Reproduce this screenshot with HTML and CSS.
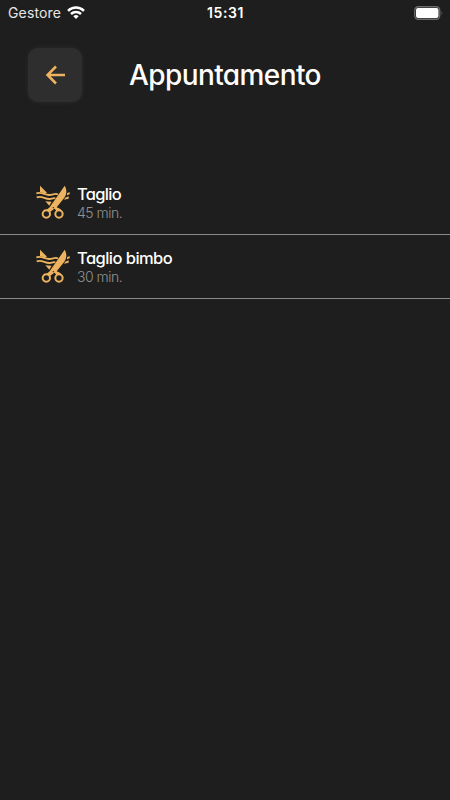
FILE: index.html
```html
<!DOCTYPE html>
<html lang="it">
<head>
<meta charset="utf-8">
<meta name="viewport" content="width=device-width">
<title>Appuntamento</title>
<link rel="stylesheet" href="styles.css">
</head>
<body>
<svg class="defs" aria-hidden="true">
  <symbol id="scissors" viewBox="6 9 102 105">
    <g fill="none" stroke="#edb35f" stroke-width="5.500">
      <circle cx="37" cy="96" r="11" stroke-width="6"/>
      <circle cx="75" cy="96" r="11" stroke-width="6"/>
      <path d="M7 34C23 29 32 39 45 39S61 33 72 37M8 46C23 40 32 51 45 51S57 47 64 49"/>
    </g>
    <path fill="#edb35f" d="M18 11L39 32 31 34 18 30ZM92 11C99 23 99 36 91 47L68 76C75 78 82 82 83 88L68 86 61 80 47 91 37 84 47 76ZM34 58L53 59 46 71ZM99 34L107 30V37L99 40ZM94 47L104 43V50L90 53Z"/>
    <circle cx="58" cy="77" r="2" fill="#1e1e1e"/>
  </symbol>
</svg>
<div class="status">
  <div class="carrier"><span class="carrier-name">Gestore</span>
    <svg class="wifi" viewBox="0 0 18 13"><g fill="none" stroke="#fff" stroke-width="2.500"><path d="M1 4.800C5.500.4 12.500.4 17 4.800"/><path d="M4 8C6.800 5.300 11.200 5.300 14 8"/></g><path fill="#fff" d="M6.300 10.200Q9 7.900 11.700 10.200L9 12.900Z"/></svg>
  </div>
  <div class="time">15:31</div>
  <svg class="battery" viewBox="0 0 30 14"><rect x="1.750" y=".75" width="25" height="12.500" rx="3.500" fill="none" stroke="#6b6b6b" stroke-width="1.300"/><rect x="3" y="2" width="22.500" height="10" rx="2" fill="#fff"/><path d="M28.500 5Q30 7 28.500 9Z" fill="#777"/></svg>
</div>
<header class="header">
  <button class="back" aria-label="Indietro"><svg viewBox="0 0 20 20"><path d="M20 10H2M11 1.500L2.500 10L11 18.500" fill="none" stroke="#edb35f" stroke-width="2.500"/></svg></button>
  <h1 class="title">Appuntamento</h1>
</header>
<main class="services">
  <div class="service">
    <svg class="icon"><use href="#scissors"/></svg>
    <div><div class="name name-short">Taglio</div><div class="duration">45 min.</div></div>
  </div>
  <div class="service">
    <svg class="icon"><use href="#scissors"/></svg>
    <div><div class="name">Taglio bimbo</div><div class="duration">30 min.</div></div>
  </div>
</main>
</body>
</html>
```
FILE: styles.css
```css
* { box-sizing: border-box; }
body {
  margin: 0;
  height: 800px;
  overflow: hidden;
  background: #1e1e1e;
  color: #fff;
  font-family: Inter, "Liberation Sans", sans-serif;
  font-feature-settings: "cv11";
}
.defs { display: block; width: 0; height: 0; }
.status {
  display: grid;
  grid-template-columns: 1fr auto 1fr;
  align-items: center;
  height: 25px;
  padding: 0 7px 0 8px;
  font-size: 14px;
  font-feature-settings: normal;
}
.carrier { display: flex; align-items: center; gap: 6px; color: #e6e6e6; }
.carrier-name { letter-spacing: .15px; }
.wifi { width: 18px; height: 13px; }
.time { font-weight: 600; font-size: 14px; letter-spacing: .55px; }
.battery { width: 30px; height: 14px; justify-self: end; }
.header {
  display: grid;
  grid-template-columns: 54px 1fr 54px;
  align-items: center;
  padding: 23px 28px 0;
}
.back {
  display: grid;
  place-items: center;
  width: 54px;
  height: 54px;
  padding: 0;
  border: 0;
  border-radius: 10px;
  background: #2e2e2e;
  box-shadow: 0 0 5px #2c2c2c;
}
.back svg { width: 20px; height: 20px; }
.title {
  margin: 0;
  text-align: center;
  font-size: 28px;
  line-height: 34px;
  font-weight: 500;
  letter-spacing: -.6px;
}
.services { padding-top: 69px; }
.service {
  display: flex;
  gap: 7px;
  height: 63.500px;
  padding: 13px 36px 0;
  border-bottom: 1px solid #898989;
}
.service:first-child { height: 64px; }
.icon { width: 34px; height: 35px; margin-top: 1px; flex: none; }
.name { font-size: 16.500px; line-height: 20px; font-weight: 500; letter-spacing: -.55px; }
.name-short { letter-spacing: -.7px; }
.duration { font-size: 14px; line-height: 17px; font-weight: 300; letter-spacing: -.5px; color: #929292; }
```
